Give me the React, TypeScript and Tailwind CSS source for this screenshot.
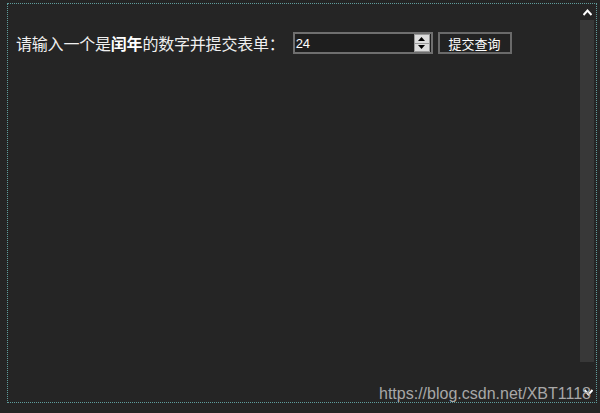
import React from 'react';

const ArrowUp = () => (
  <svg width="9" height="7" viewBox="0 0 9 7">
    <path d="M0.5 6 L4.5 1.5 L8.5 6" fill="none" stroke="#ffffff" strokeWidth="2" />
  </svg>
);

const ArrowDown = () => (
  <svg width="9" height="7" viewBox="0 0 9 7">
    <path d="M0.5 1 L4.5 5.5 L8.5 1" fill="none" stroke="#ffffff" strokeWidth="2" />
  </svg>
);

const Spinner = () => (
  <div className="flex flex-col w-[16px] h-[18px] border border-[#9a9a9a] bg-[#dcdcdc]">
    <div className="flex-1 flex items-center justify-center border-b border-[#9a9a9a]">
      <svg width="7" height="4" viewBox="0 0 7 4"><path d="M3.5 0 L7 4 L0 4 Z" fill="#000" /></svg>
    </div>
    <div className="flex-1 flex items-center justify-center">
      <svg width="7" height="4" viewBox="0 0 7 4"><path d="M0 0 L7 0 L3.5 4 Z" fill="#000" /></svg>
    </div>
  </div>
);

export default function App() {
  return (
    <div className="w-[600px] h-[413px] bg-[#252525] overflow-hidden pt-[3px] pl-[7px] font-['Noto_Sans_CJK_SC',sans-serif]">
      <div className="relative w-[590px] h-[400px] border border-dotted border-[#5f9c9c] flex">
        {/* page content */}
        <div className="flex-1 pl-[8px] pt-[28px]">
          <div className="flex items-center h-[22px]">
            <span className="text-[16px] leading-[22px] text-[#f0f0f0] tracking-[-0.2px]">
              请输入一个是<b className="font-bold text-white">闰年</b>的数字并提交表单：
            </span>
            <div className="ml-[8px] flex items-center w-[140px] h-[22px] border-2 border-[#6f6f6f] bg-[#1e1e1e] pr-[1px]">
              <span className="flex-1 pl-[1px] text-[13px] leading-none text-white font-['Liberation_Sans',sans-serif]">24</span>
              <Spinner />
            </div>
            <button className="ml-[5px] w-[74px] h-[22px] border-2 border-[#6a6a6a] bg-[#222222] text-[13px] leading-none text-white">
              提交查询
            </button>
          </div>
        </div>
        {/* scrollbar */}
        <div className="w-[16px] flex flex-col items-center mr-[1px]">
          <div className="h-[16px] pt-[5px] flex justify-center"><ArrowUp /></div>
          <div className="w-[14px] h-[342px] bg-[#383838]" />
          <div className="flex-1 flex items-end justify-center pb-[6px] pl-[2px]"><ArrowDown /></div>
        </div>
        <div className="absolute right-[5px] bottom-[-2px] text-[16px] leading-[20px] text-[#a8a8a8] font-['Liberation_Sans',sans-serif]">
          https://blog.csdn.net/XBT1118
        </div>
      </div>
    </div>
  );
}
